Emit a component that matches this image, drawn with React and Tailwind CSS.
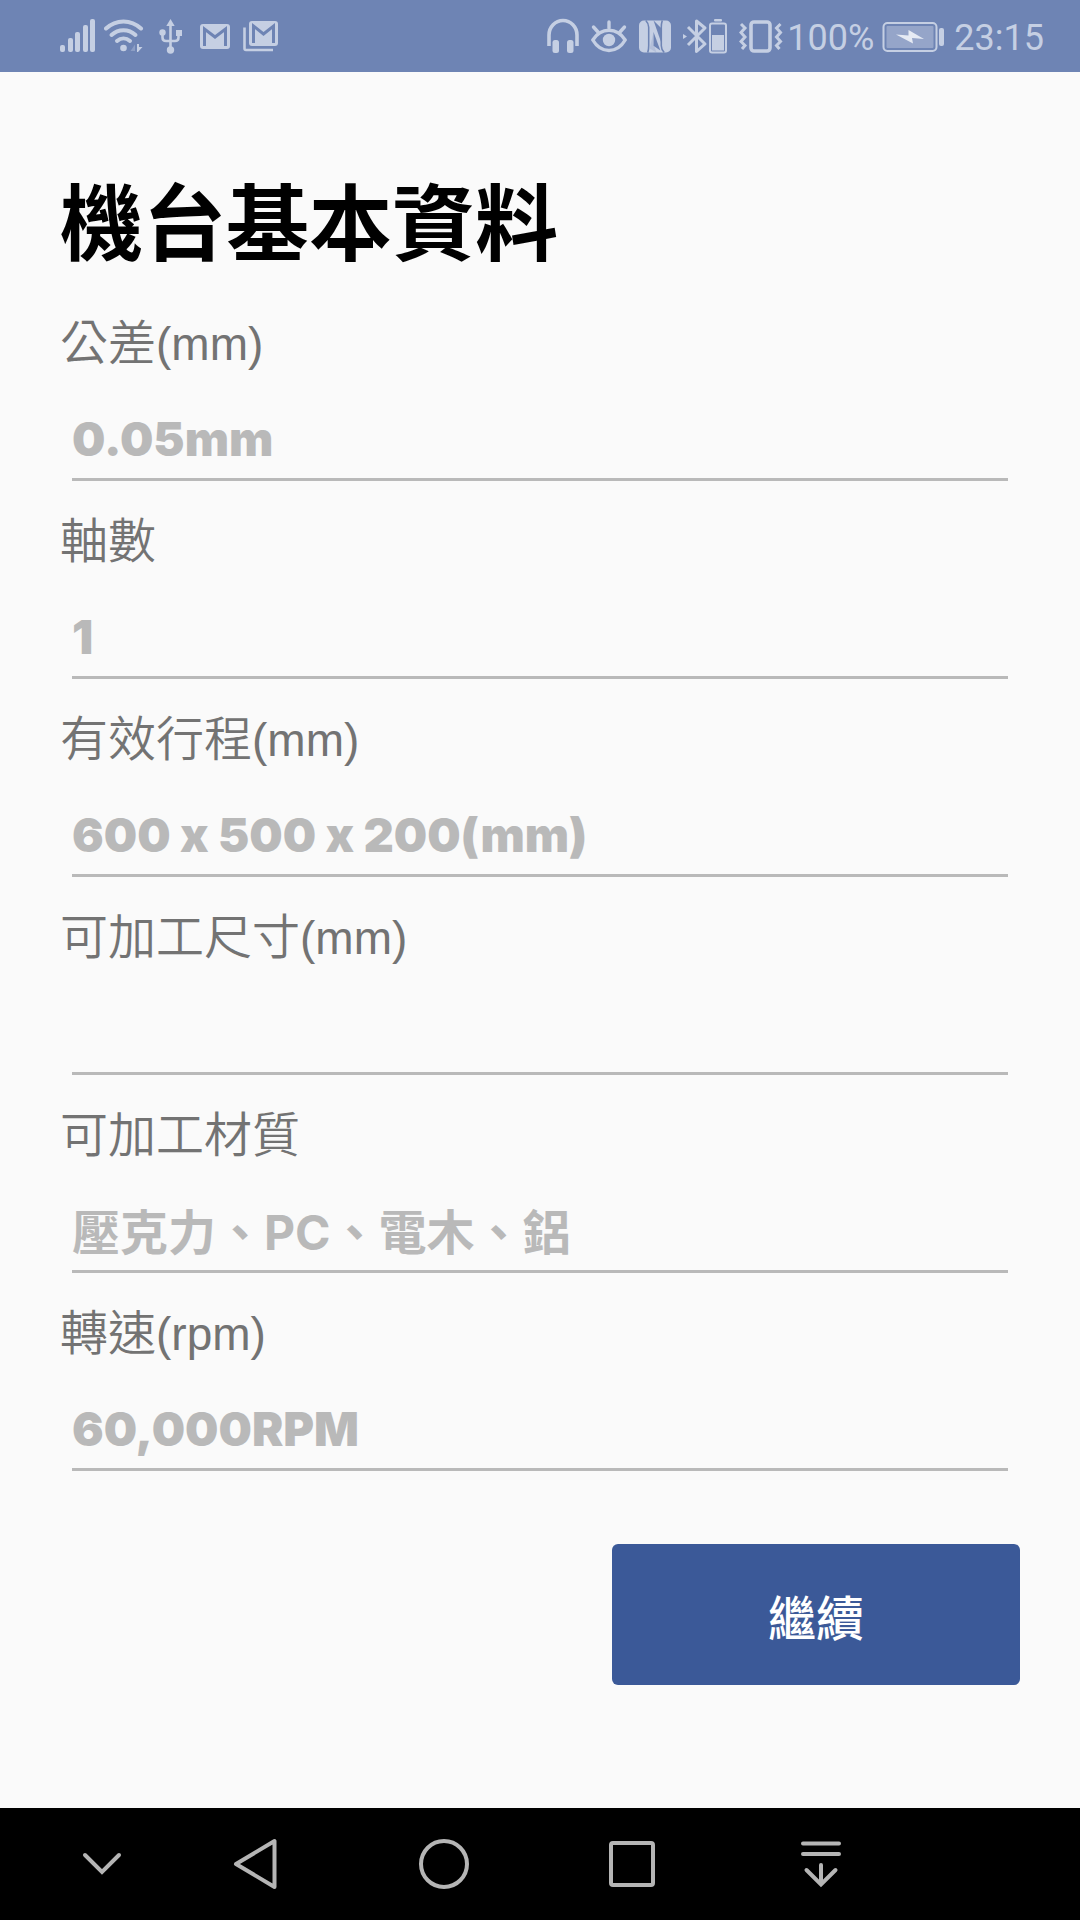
import { useState } from 'react';

const initialFields = [
  { id: 'tolerance', label: '公差', unit: '(mm)', value: '0.05mm' },
  { id: 'axes', label: '軸數', value: '1' },
  { id: 'travel', label: '有效行程', unit: '(mm)', value: '600 x 500 x 200(mm)' },
  { id: 'size', label: '可加工尺寸', unit: '(mm)', value: '' },
  { id: 'material', label: '可加工材質', value: '壓克力、PC、電木、鋁' },
  { id: 'speed', label: '轉速', unit: '(rpm)', value: '60,000RPM' },
];

const SignalIcon = () => (
  <svg className="w-9 h-9" viewBox="0 0 36 36" fill="currentColor">
    <rect x="0" y="27" width="5" height="7" rx="2" />
    <rect x="8" y="20" width="5" height="14" rx="2" />
    <rect x="15" y="14" width="5" height="20" rx="2" />
    <rect x="23" y="7" width="5" height="27" rx="2" />
    <rect x="30" y="1" width="5" height="33" rx="2" />
  </svg>
);

const WifiIcon = () => (
  <svg className="w-10 h-9" viewBox="0 0 40 36" fill="none" stroke="currentColor" strokeWidth="4" strokeLinecap="round">
    <path d="M2 10.500C12 1 27 1 37 10.500" />
    <path d="M7.500 17C14.500 10.500 24.500 10.500 31.500 17" />
    <path d="M13 23C17 19.500 22 19.500 26 23" />
    <circle cx="19.500" cy="30" r="3.300" fill="currentColor" stroke="none" />
    <path d="M31 26.500v6.500h-4.500z" fill="currentColor" stroke="none" opacity="0.35" />
    <path d="M33 26h2v3h3.500l-4.500 5h-1z" fill="currentColor" stroke="none" />
  </svg>
);

const UsbIcon = () => (
  <svg className="w-6 h-9" viewBox="0 0 24 36" fill="none" stroke="currentColor" strokeWidth="2.600">
    <path d="M11.500 6v25M3.500 15v4.500q0 3.500 3.500 3.500h9q3.500 0 3.500-3.500V15" />
    <path d="M11.500 1l4.200 7H7.300z" fill="currentColor" stroke="none" />
    <circle cx="3.500" cy="14.500" r="3.200" fill="currentColor" stroke="none" />
    <rect x="17" y="12" width="6" height="6" fill="currentColor" stroke="none" />
    <circle cx="11.500" cy="32" r="3.700" fill="currentColor" stroke="none" />
  </svg>
);

const MailIcon = () => (
  <svg className="w-8 h-9" viewBox="0 0 32 36" fill="none">
    <rect x="1" y="6" width="30" height="25" rx="3" fill="currentColor" />
    <path d="M5.500 28V11l10.500 8 10.500-8v17" stroke="#6e84b4" strokeWidth="3" />
  </svg>
);

const MailStackIcon = () => (
  <svg className="w-9 h-9" viewBox="0 0 36 36" fill="none">
    <path d="M1.500 9.500v21q0 1.500 1.500 1.500h27" stroke="currentColor" strokeWidth="2.600" />
    <rect x="6" y="3" width="29" height="25" rx="3" fill="currentColor" />
    <path d="M10.500 25V8l10 8 10-8v17" stroke="#6e84b4" strokeWidth="3" />
  </svg>
);

const HeadphonesIcon = () => (
  <svg className="w-8 h-9" viewBox="0 0 32 36" fill="none">
    <path d="M2 28V17a14 14.500 0 0 1 28 0v11" stroke="currentColor" strokeWidth="3.600" />
    <rect x="5.500" y="22" width="6.500" height="13" rx="2.500" fill="currentColor" />
    <rect x="20" y="22" width="6.500" height="13" rx="2.500" fill="currentColor" />
  </svg>
);

const EyeIcon = () => (
  <svg className="w-9 h-9" viewBox="0 0 36 36" fill="none" stroke="currentColor" strokeWidth="3.400" strokeLinecap="round" strokeLinejoin="round">
    <path d="M1.800 22C10 9 26 9 34.200 22 26 36 10 36 1.800 22z" />
    <circle cx="18" cy="22" r="6.200" fill="currentColor" stroke="none" />
    <path d="M18 4v6M2.500 9l4.500 5M33.500 9l-4.500 5" />
  </svg>
);

const NfcIcon = () => (
  <svg className="w-8 h-9" viewBox="0 0 33 36" fill="none">
    <rect x="0" y="2" width="33" height="33" rx="5" fill="currentColor" />
    <path d="M7 2q3 3 3 7v19q0 4-1 7M26 35q-3-3-3-7V9q0-4 1-7" stroke="#6e84b4" strokeWidth="1.600" />
    <path d="M15 2l8 8v15z" fill="#6e84b4" />
    <path d="M18 35l-7-4 4-17v12z" fill="#6e84b4" opacity="0.2" />
    <path d="M15 14v14l7 5z" fill="#6e84b4" />
  </svg>
);

const BluetoothIcon = () => (
  <svg className="w-11 h-9" viewBox="0 0 44 36" fill="none" stroke="currentColor">
    <path d="M5 9l17 17-8.500 7.500V3L22 10 5 27" strokeWidth="3" strokeLinejoin="round" />
    <path d="M0 16l4 2.500L0 21z" fill="currentColor" stroke="none" />
    <rect x="27" y="5.500" width="16" height="29" rx="2" strokeWidth="2" />
    <rect x="29" y="17" width="12" height="15.500" fill="currentColor" stroke="none" />
    <rect x="31" y="1" width="8" height="2.500" rx="1" fill="currentColor" stroke="none" />
  </svg>
);

const VibrateIcon = () => (
  <svg className="w-11 h-9" viewBox="0 0 44 36" fill="none" stroke="currentColor">
    <rect x="12" y="4" width="19" height="29" rx="3" strokeWidth="3.600" />
    <path d="M2 6l4 4-4 4.500L6 19l-4 4.500 4 4-3 3.500" strokeWidth="3" />
    <path d="M41.500 6l-4 4 4 4.500-4 4.500 4 4.500-4 4 3 3.500" strokeWidth="3" />
  </svg>
);

const BatteryIcon = () => (
  <svg className="w-16 h-9" viewBox="0 0 64 36" fill="none">
    <rect x="1.500" y="5" width="53" height="28" rx="4" stroke="currentColor" strokeWidth="2" />
    <rect x="4.500" y="8" width="47" height="22" rx="1" fill="currentColor" opacity="0.450" />
    <rect x="57" y="10" width="5" height="18" rx="2" fill="currentColor" />
    <path d="M14 16.500l12.500 1V12l15.500 9-12-1 1 5.500z" fill="#e6ebf4" />
  </svg>
);

const StatusBar = () => (
  <header className="flex h-[72px] items-center justify-between bg-[#6e84b4] pl-[60px] pr-9 text-[#c5cfe3]">
    <div className="flex items-center">
      <SignalIcon />
      <span className="ml-2"><WifiIcon /></span>
      <span className="ml-[15px]"><UsbIcon /></span>
      <span className="ml-4"><MailIcon /></span>
      <span className="ml-3"><MailStackIcon /></span>
    </div>
    <div className="flex items-center font-['Roboto',sans-serif] text-4xl leading-9">
      <HeadphonesIcon />
      <span className="ml-3"><EyeIcon /></span>
      <span className="ml-3"><NfcIcon /></span>
      <span className="ml-3"><BluetoothIcon /></span>
      <span className="ml-3"><VibrateIcon /></span>
      <span className="ml-1 pt-1">100%</span>
      <span className="ml-2"><BatteryIcon /></span>
      <span className="ml-2 pt-1">23:15</span>
    </div>
  </header>
);

const Field = ({ id, label, unit, value, onChange }) => (
  <div className="flex flex-col pt-6">
    <label
      htmlFor={id}
      className="h-16 text-5xl leading-[64px] font-[350] text-[#737373] font-['Noto_Sans_CJK_TC',sans-serif]"
    >
      {label}
      {unit && <span className="text-[46px] leading-none font-['Liberation_Sans',sans-serif]">{unit}</span>}
    </label>
    <input
      id={id}
      type="text"
      value={value}
      onChange={onChange}
      className={`mx-3 h-[110px] border-b-3 border-[#b9b9b9] text-[#b9b9b9] outline-none [font-feature-settings:'calt'_0] font-['Inter','Noto_Sans_CJK_TC',sans-serif] ${
        id === 'material' ? 'pt-6 text-5xl font-bold' : 'pt-7 text-[47px] font-black'
      }`}
    />
  </div>
);

const NavBar = () => (
  <nav className="grid h-28 grid-cols-[162fr_188fr_188fr_188fr_188fr_166fr] items-center bg-black text-[#b5b5b5]">
    <button type="button" aria-label="隱藏" className="flex justify-center pl-[42px]">
      <svg className="size-14" viewBox="0 0 56 56" fill="none" stroke="currentColor" strokeWidth="4" strokeLinecap="round">
        <path d="M11 19l17 17 17-17" />
      </svg>
    </button>
    <button type="button" aria-label="返回" className="flex justify-center">
      <svg className="size-14" viewBox="0 0 56 56" fill="none" stroke="currentColor" strokeWidth="4" strokeLinejoin="round">
        <path d="M8 28L46.500 5v46z" />
      </svg>
    </button>
    <button type="button" aria-label="主畫面" className="flex justify-center">
      <svg className="size-14" viewBox="0 0 56 56" fill="none" stroke="currentColor" strokeWidth="4">
        <circle cx="28" cy="28" r="23" />
      </svg>
    </button>
    <button type="button" aria-label="最近使用" className="flex justify-center">
      <svg className="size-14" viewBox="0 0 56 56" fill="none" stroke="currentColor" strokeWidth="4">
        <rect x="7" y="7" width="42" height="42" rx="2" />
      </svg>
    </button>
    <button type="button" aria-label="通知" className="flex justify-center">
      <svg className="size-14" viewBox="0 0 56 56" fill="none" stroke="currentColor" strokeWidth="4" strokeLinecap="round">
        <path d="M11 7.500h36M11 18h36M29 29v19M14.500 34L29 48.500 43.500 34" />
      </svg>
    </button>
  </nav>
);

const App = () => {
  const [fields, setFields] = useState(initialFields);

  const update = (id, value) => {
    setFields(fields.map((f) => (f.id === id ? { ...f, value } : f)));
  };

  return (
    <div className="flex min-h-screen flex-col bg-[#fafafa]">
      <StatusBar />

      <main className="flex-1 px-[60px] pt-[98px]">
        <h1 className="pb-[17px] text-[83px] leading-[96px] font-bold text-black font-['Noto_Sans_CJK_TC',sans-serif]">
          機台基本資料
        </h1>

        <form onSubmit={(e) => e.preventDefault()}>
          {fields.map((f) => (
            <Field key={f.id} {...f} onChange={(e) => update(f.id, e.target.value)} />
          ))}

          <div className="mt-[73px] flex justify-end">
            <button
              type="submit"
              className="h-[141px] w-[408px] rounded-md bg-[#3b5998] text-5xl font-medium text-white font-['Noto_Sans_CJK_TC',sans-serif]"
            >
              繼續
            </button>
          </div>
        </form>
      </main>

      <NavBar />
    </div>
  );
};

export default App;
